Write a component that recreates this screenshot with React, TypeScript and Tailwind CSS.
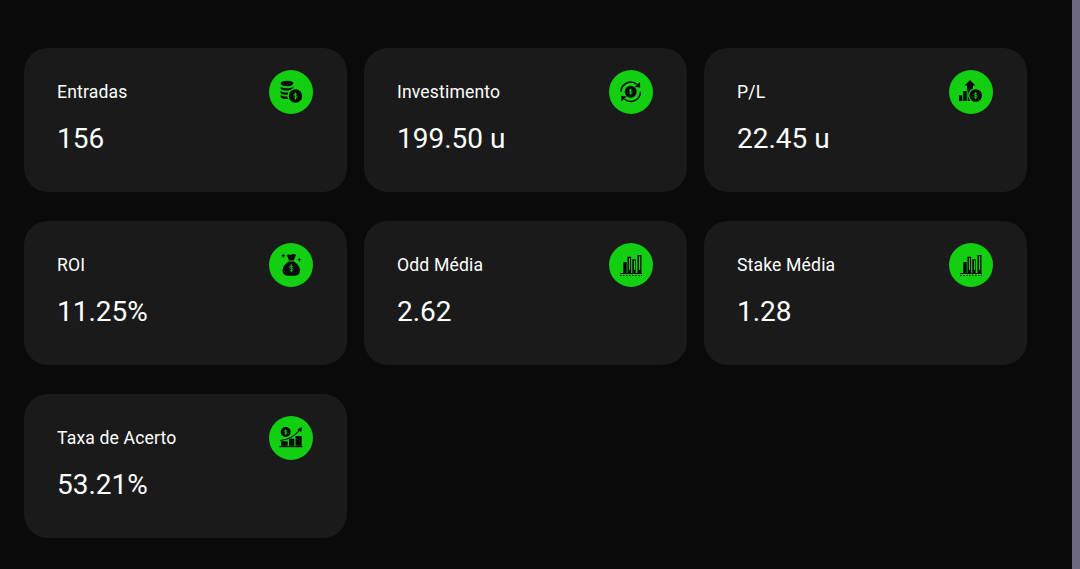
const GREEN = '#12cf12'
const INK = '#0a0a0a'

const Dollar = ({ cx, cy, size }: { cx: number; cy: number; size: number }) => (
  <path
    d={`M${cx + size * 0.55} ${cy - size * 0.55}C${cx + size * 0.3} ${cy - size * 0.95} ${cx - size * 0.7} ${cy - size * 0.9} ${cx - size * 0.6} ${cy - size * 0.3}C${cx - size * 0.5} ${cy + size * 0.2} ${cx + size * 0.6} ${cy - size * 0.2} ${cx + size * 0.6} ${cy + size * 0.35}C${cx + size * 0.6} ${cy + size * 0.95} ${cx - size * 0.4} ${cy + size * 0.95} ${cx - size * 0.6} ${cy + size * 0.5}M${cx} ${cy - size * 1.3}V${cy + size * 1.3}`}
    fill="none"
    stroke={GREEN}
    strokeWidth="0.9"
  />
)

function CoinsIcon() {
  return (
    <svg viewBox="0 0 44 44" className="w-11 h-11">
      <ellipse cx="18" cy="13.500" rx="6.300" ry="2.700" fill={INK} />
      <path d="M11.700 16.500c1 2.400 11.600 2.400 12.600 0v2.300c-1 2.400-11.600 2.400-12.600 0z" fill={INK} />
      <path d="M11.700 20.700c1 2.200 9 2.400 12 .7l-3.500 3.300c-3 .3-7.500 0-8.500-1.800z" fill={INK} />
      <path d="M11.700 24.800c1 1.400 4.300 1.900 6.800 1.800l.5 2.300c-3 .3-6.300-.1-7.300-1.900z" fill={INK} />
      <circle cx="26.500" cy="26" r="8" fill={GREEN} />
      <circle cx="26.500" cy="26" r="6.700" fill={INK} />
      <Dollar cx={26.5} cy={26} size={2.8} />
    </svg>
  )
}

function CycleIcon() {
  return (
    <svg viewBox="0 0 44 44" className="w-11 h-11">
      <circle cx="21.700" cy="21.700" r="6" fill={INK} />
      <Dollar cx={21.7} cy={21.7} size={2.3} />
      <path d="M12 21.700a9.700 9.700 0 0 1 16-7.300" fill="none" stroke={INK} strokeWidth="1.500" />
      <path d="M31.400 21.700a9.700 9.700 0 0 1-16 7.300" fill="none" stroke={INK} strokeWidth="1.500" />
      <path d="M31 12l.2 5.600-5.400-.6z" fill={INK} />
      <path d="M12.400 31.400l-.2-5.600 5.400.6z" fill={INK} />
    </svg>
  )
}

function ProfitIcon() {
  return (
    <svg viewBox="0 0 44 44" className="w-11 h-11">
      <path d="M21 10l5.500 5.500h-2.500v5h-6v-5h-2.500z" fill={INK} />
      <rect x="10" y="25.300" width="3.300" height="5.700" fill={INK} />
      <rect x="14.300" y="21" width="3.400" height="10" fill={INK} />
      <rect x="18.700" y="15.500" width="3.400" height="15.500" fill={INK} />
      <circle cx="26.700" cy="25.500" r="7.600" fill={GREEN} />
      <circle cx="26.700" cy="25.500" r="6.300" fill={INK} />
      <Dollar cx={26.7} cy={25.5} size={2.7} />
    </svg>
  )
}

function MoneyBagIcon() {
  return (
    <svg viewBox="0 0 44 44" className="w-11 h-11">
      <path d="M17.700 12c1.800-1.500 3 .4 4.600-.5s3.200-.7 4.700.5l-2.300 5.500h-4.700z" fill={INK} />
      <path d="M19.500 18.500h5.600c3.600 2.300 5.900 5.700 5.900 9 0 3.300-2.300 5.200-4.800 5.200h-7.800c-2.500 0-4.800-1.900-4.800-5.200 0-3.300 2.300-6.700 5.900-9z" fill={INK} />
      <Dollar cx={22.3} cy={25.3} size={3} />
      <path d="M14.300 10.500l.7 1.500 1.500.7-1.500.7-.7 1.500-.7-1.500-1.500-.7 1.500-.7z" fill={INK} />
      <path d="M30.300 14.700l.6 1.400 1.400.6-1.400.6-.6 1.400-.6-1.400-1.400-.6 1.400-.6z" fill={INK} />
    </svg>
  )
}

function BarsIcon() {
  return (
    <svg viewBox="0 0 44 44" className="w-11 h-11">
      <rect x="14.300" y="19" width="3.400" height="11" fill={INK} />
      <rect x="18.500" y="13.700" width="3.600" height="16.300" fill={INK} />
      <rect x="20" y="15" width="1" height="12" fill={GREEN} />
      <rect x="23.300" y="16.300" width="3.400" height="13.700" fill={INK} />
      <rect x="25" y="17.500" width="1" height="9.500" fill={GREEN} />
      <rect x="28.500" y="12" width="4" height="18" fill={INK} />
      <rect x="30" y="13.300" width="1.200" height="13.700" fill={GREEN} />
      <rect x="11" y="30" width="22" height="1" fill={INK} />
      <path d="M11 32.500h22" stroke={INK} strokeWidth="1.200" strokeDasharray="1.500 1.500" />
    </svg>
  )
}

function GrowthIcon() {
  return (
    <svg viewBox="0 0 44 44" className="w-11 h-11">
      <circle cx="16.700" cy="16" r="5" fill={INK} />
      <Dollar cx={16.7} cy={16} size={2} />
      <path d="M11 24.500c7-.5 14-3 20-11" fill="none" stroke={INK} strokeWidth="1.100" />
      <path d="M33 11l-.8 5-3.800-2.600z" fill={INK} />
      <rect x="12" y="25.300" width="6.700" height="4.500" fill={INK} />
      <rect x="20" y="22.700" width="5.300" height="7.100" fill={INK} />
      <rect x="26.500" y="20" width="6.200" height="9.800" fill={INK} />
      <rect x="10.500" y="30" width="23" height="1.200" fill={INK} />
    </svg>
  )
}

const cards = [
  { title: 'Entradas', value: '156', icon: <CoinsIcon /> },
  { title: 'Investimento', value: '199.50 u', icon: <CycleIcon /> },
  { title: 'P/L', value: '22.45 u', icon: <ProfitIcon /> },
  { title: 'ROI', value: '11.25%', icon: <MoneyBagIcon /> },
  { title: 'Odd Média', value: '2.62', icon: <BarsIcon /> },
  { title: 'Stake Média', value: '1.28', icon: <BarsIcon /> },
  { title: 'Taxa de Acerto', value: '53.21%', icon: <GrowthIcon /> },
]

export default function App() {
  return (
    <div className="flex h-screen overflow-hidden bg-[#0a0a0a] font-['Roboto',sans-serif] text-white">
      <main className="flex-1 pl-6 pt-12">
        <div className="grid grid-cols-[repeat(3,323px)] gap-x-[17px] gap-y-[29px]">
          {cards.map((card) => (
            <div key={card.title} className="flex h-36 items-start justify-between rounded-3xl bg-[#1a1a1a] pl-[33px] pr-[34px] pt-[22px]">
              <div>
                <p className="mt-[11px] text-[17.6px] leading-[22px] tracking-[0.15px]">{card.title}</p>
                <p className="mt-[18px] text-[28px] leading-[36px]">{card.value}</p>
              </div>
              <div className="h-11 w-11 rounded-full bg-[#12cf12]">{card.icon}</div>
            </div>
          ))}
        </div>
      </main>
      <div className="w-2 bg-[#6d6a80]" />
    </div>
  )
}
